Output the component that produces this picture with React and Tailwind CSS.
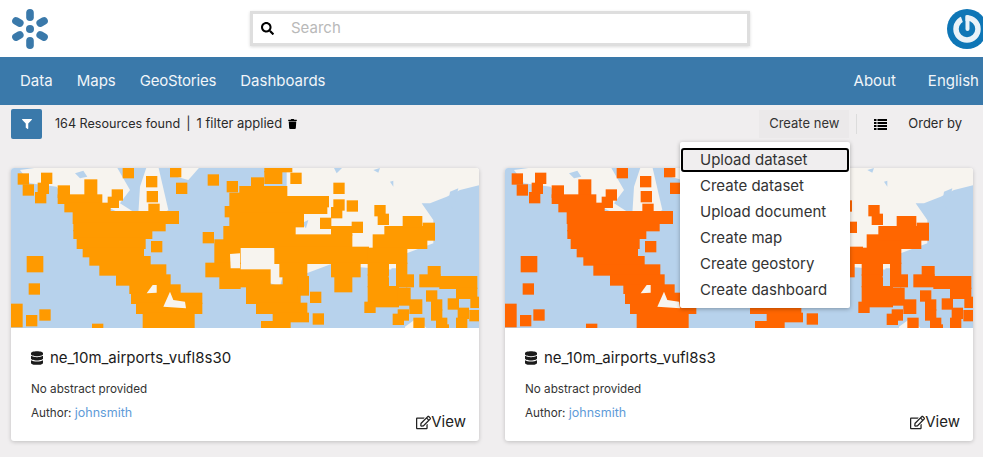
import React from 'react';
import { FaSearch, FaFilter, FaTrash, FaDatabase, FaRegEdit } from 'react-icons/fa';

const NAV_LEFT = [
    { label: 'Data', cls: '' },
    { label: 'Maps', cls: '' },
    { label: 'GeoStories', cls: 'tracking-[-0.2px]' },
    { label: 'Dashboards', cls: '' },
];
const MENU = ['Upload dataset', 'Create dataset', 'Upload document', 'Create map', 'Create geostory', 'Create dashboard'];

// map coordinates are page pixels x3, with y counted from 160
const LAND = [
    '60,30 130,20 350,20 390,90 360,130 400,155 360,160 300,130 200,130 170,80 90,70',
    '440,20 475,20 505,150 470,170 415,160 420,80',
    '540,20 600,20 565,60 530,50',
    '860,20 1440,20 1440,75 1380,90 1340,110 1290,130 1265,130 1300,180 1300,250 1220,280 1190,330 1060,320 1000,310 920,340 920,300 860,200',
    '680,280 720,262 820,262 850,340 840,380 720,335 690,325',
    '1215,500 1250,475 1285,510 1215,510',
];

const LAKES = [
    '225,40 250,32 262,50 240,55',
    '1120,30 1140,24 1135,38',
    '1170,65 1180,62 1180,80',
    '905,190 925,180 918,205',
    '1000,20 1030,20 1010,40',
    '1350,95 1375,85 1360,150 1345,125',
];

// y1, y2, x1, x2: the solid masses of markers, stepped like the markers are
const ROWS = [
    [78, 112, 175, 208], [60, 105, 255, 290], [105, 130, 175, 305], [130, 155, 195, 330],
    [155, 190, 220, 535], [190, 212, 222, 495], [212, 235, 222, 455], [235, 265, 232, 435],
    [265, 290, 250, 430], [290, 315, 270, 450], [315, 345, 300, 497], [345, 375, 350, 510],
    [375, 400, 390, 540], [400, 430, 395, 605], [430, 460, 410, 605], [460, 510, 430, 582],
    [100, 140, 690, 720], [140, 170, 676, 720], [170, 200, 690, 720], [200, 240, 672, 720],
    [240, 310, 645, 720], [310, 350, 618, 720], [350, 385, 660, 720],
    [20, 35, 795, 875], [35, 70, 795, 845], [54, 80, 755, 790], [80, 110, 720, 860],
    [110, 140, 720, 985], [140, 160, 720, 980], [160, 200, 720, 910], [200, 225, 720, 885],
    [200, 225, 995, 1055], [225, 262, 720, 1055], [225, 265, 1120, 1280], [200, 240, 1155, 1303],
    [170, 200, 1210, 1265], [190, 200, 1270, 1303], [262, 310, 825, 1105], [265, 310, 1105, 1220],
    [310, 345, 1105, 1165], [310, 380, 1190, 1220], [345, 380, 1105, 1165], [345, 380, 1220, 1240],
    [310, 350, 840, 920], [310, 350, 995, 1080], [350, 380, 850, 925], [350, 395, 1005, 1055],
    [345, 380, 1260, 1320], [320, 345, 1285, 1320], [350, 385, 1320, 1430], [385, 415, 1370, 1430],
    [380, 440, 1105, 1195], [385, 435, 1195, 1230], [420, 460, 1230, 1265],
    [330, 380, 720, 810], [375, 430, 740, 900], [430, 460, 770, 920], [460, 485, 820, 925],
    [485, 510, 785, 870], [380, 405, 895, 925],
    [290, 335, 82, 128], [433, 500, 33, 66],
];

const SQUARES = [
    [70, 57], [85, 90], [140, 55], [385, 38], [455, 65], [457, 110], [462, 148], [527, 35], [545, 85], [640, 60], [697, 80],
    [352, 105], [340, 127], [470, 260], [625, 233], [103, 387], [95, 482], [135, 465], [293, 508], [130, 85], [122, 113],
    [888, 55], [1017, 85], [1017, 135], [1010, 158], [1057, 138], [977, 190], [1072, 202], [1140, 152], [1150, 178],
    [947, 412], [955, 477], [1110, 442], [1295, 408], [1310, 435], [1360, 432], [1428, 427], [1425, 467], [1390, 460],
    [1385, 490], [1310, 465], [1325, 490], [1210, 465], [1195, 478], [1257, 490], [1330, 510],
];

function MapThumb({ color }) {
    const id = `soft-${color.slice(1)}`;
    return (
        <svg viewBox="33 24 1404 480" className="block w-full h-40">
            <defs>
                <filter id={id} x="-2%" y="-2%" width="104%" height="104%">
                    <feGaussianBlur stdDeviation="1.6" />
                </filter>
            </defs>
            <g filter={`url(#${id})`}>
                <rect x="0" y="0" width="1500" height="540" fill="#b7d2ec" />
                {LAND.map((p) => <polygon key={p} points={p} fill="#f7f4ef" />)}
                {LAKES.map((p) => <polygon key={p} points={p} fill="#b7d2ec" />)}
                {/* rows overlap by a few units so no seam shows between them */}
                {ROWS.map(([y1, y2, x1, x2]) => (
                    <rect key={`${y1}-${y2}-${x1}`} x={x1 - 2} y={y1 - 2} width={x2 - x1 + 4} height={y2 - y1 + 4} fill={color} />
                ))}
                {SQUARES.map(([x, y]) => <rect key={`${x}-${y}`} x={x - 17} y={y - 17} width="34" height="34" fill={color} />)}
                <polygon points="690,282 720,280 720,325 692,325" fill="#f7f4ef" />
                <polygon points="490,440 510,395 520,420 555,425 558,445" fill="#f7f4ef" />
                <polygon points="440,400 458,375 470,375 470,398" fill="#f7f4ef" />
                <polygon points="1165,352 1175,325 1188,325 1188,355" fill="#b7d2ec" />
            </g>
        </svg>
    );
}

function Logo() {
    return (
        <svg viewBox="0 0 40 40" className="w-10 h-10 shrink-0 text-[#3a79aa]" fill="currentColor">
            <circle cx="20" cy="20" r="4" />
            {[0, 60, 120, 180, 240, 300].map((a) => (
                <rect key={a} x="16.2" y="0" width="7.6" height="12" rx="3.8" transform={`rotate(${a} 20 20)`} />
            ))}
        </svg>
    );
}

function PowerIcon() {
    return (
        <svg viewBox="0 0 40 40" className="w-10 h-10 shrink-0">
            <circle cx="20" cy="20" r="20" fill="#0e76b6" />
            <circle cx="20" cy="20" r="11" fill="none" stroke="#e9f2f8" strokeWidth="5.5" />
            <path d="M13 5l3.5 10h2V5z" fill="#0e76b6" />
            <path d="M20.5 8v12" stroke="#e9f2f8" strokeWidth="4" strokeLinecap="round" />
        </svg>
    );
}

function ListIcon() {
    return (
        <svg viewBox="0 0 13 11" className="ml-[17px] w-[13px] h-[11px] shrink-0" fill="#000">
            <path d="M0 0h2.5v2H0zM3.5 0H13v2H3.5zM0 3h2.5v2H0zM3.5 3H13v2H3.5zM0 6h2.5v2H0zM3.5 6H13v2H3.5zM0 9h2.5v2H0zM3.5 9H13v2H3.5z" />
        </svg>
    );
}

function Card({ title, color }) {
    return (
        <div className="w-[468px] h-[273px] shrink-0 bg-white rounded-[3px] overflow-hidden shadow-[0_1px_4px_rgba(0,0,0,0.2)] flex flex-col">
            <MapThumb color={color} />
            <div className="flex-1 pt-[20px] pl-[20px] pr-[13px] flex flex-col">
                <div className="flex items-center gap-[7px] h-[20px] text-[15px] text-[#1b1b1b]">
                    <FaDatabase className="w-[12px] h-[14px]" />
                    <span>{title}</span>
                </div>
                <p className="mt-[13px] text-[11.7px] leading-[16px] text-[#333]">No abstract provided</p>
                <div className="flex justify-between">
                    <p className="mt-[8px] text-[11.7px] leading-[16px] text-[#333]">
                        Author: <span className="text-[12.5px] text-[#5f9bd8]">johnsmith</span>
                    </p>
                    <div className="mt-[15px] flex items-center text-[15px] leading-[20px] text-[#222]">
                        <FaRegEdit className="w-[15px] h-[15px]" />
                        <span>View</span>
                    </div>
                </div>
            </div>
        </div>
    );
}

export default function App() {
    return (
        <div className="w-[983px] h-[457px] overflow-hidden bg-[#f0eeef] font-['Inter',sans-serif] relative">
            <header className="h-[57px] bg-white flex items-center pl-[10px]">
                <Logo />
                <div className="ml-[200px] w-[500px] h-[35px] shrink-0 bg-white border-[3px] border-[#dedede] shadow-[0_1px_3px_rgba(0,0,0,0.15)] flex items-center pl-[8px]">
                    <FaSearch className="w-[13px] h-[13px] text-black" />
                    <span className="ml-[17px] text-[15px] text-[#b9b9b9]">Search</span>
                </div>
                <div className="ml-[197px] shrink-0">
                    <PowerIcon />
                </div>
            </header>

            <nav className="h-[48px] bg-[#3a79aa] flex items-center justify-between pl-[20px] text-[15px] text-[#f1f5f9] whitespace-nowrap">
                <div className="flex gap-[24px]">
                    {NAV_LEFT.map((item) => <span key={item.label} className={item.cls}>{item.label}</span>)}
                </div>
                <div className="flex gap-[32px] pr-[4px]">
                    <span>About</span>
                    <span>English</span>
                </div>
            </nav>

            <div className="h-[38px] flex items-center pl-[11px] pr-[21px] text-[13px] text-[#2a2a2a]">
                <button className="w-[31px] h-[30px] bg-[#3a79aa] rounded-[2px] flex items-center justify-center">
                    <FaFilter className="w-[10px] h-[10px] text-white" />
                </button>
                <span className="ml-[13px] text-[12.6px]">164 Resources found</span>
                <span className="mx-[6px]">|</span>
                <span>1 filter applied</span>
                <FaTrash className="ml-[6px] w-[9px] h-[10px] text-black" />
                <button className="ml-auto w-[90px] h-[28px] bg-[#ebe9ea] text-[#333]">Create new</button>
                <div className="ml-[7px] w-px h-[20px] bg-[#dcdcdc]" />
                <ListIcon />
                <span className="ml-[21px]">Order by</span>
            </div>

            <main className="mt-[25px] px-[11px] flex gap-[26px]">
                <Card title="ne_10m_airports_vufl8s30" color="#ff9a00" />
                <Card title="ne_10m_airports_vufl8s3" color="#ff6600" />
            </main>

            <div className="absolute left-[680px] top-[142px] w-[170px] h-[166px] bg-white rounded-[2px] shadow-[0_1px_4px_rgba(0,0,0,0.3)] pt-[6px] text-[15px] text-[#333]">
                {MENU.map((item, i) => (
                    <div
                        key={item}
                        className={i === 0
                            ? 'mx-[1px] h-[24px] mb-[1px] flex items-center pl-[17px] bg-[#f0eeef] border-2 border-black rounded-[3px]'
                            : 'h-[26px] flex items-center pl-[20px]'}
                    >
                        {item}
                    </div>
                ))}
            </div>
        </div>
    );
}
